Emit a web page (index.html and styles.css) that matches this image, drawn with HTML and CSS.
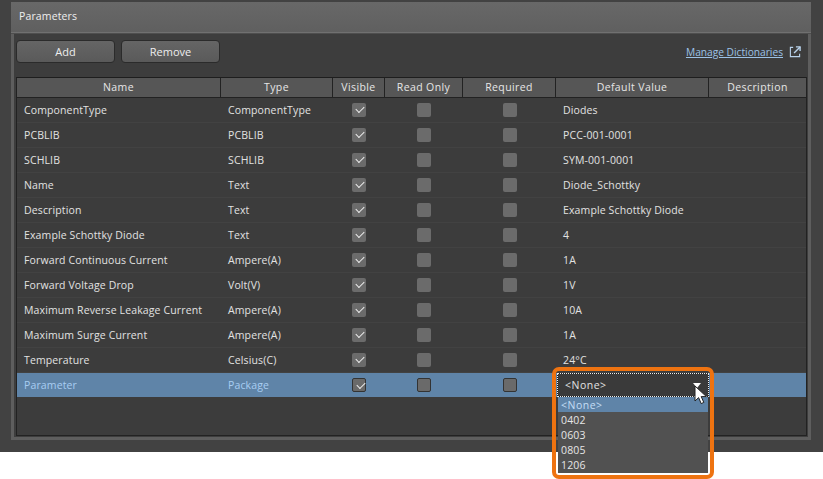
FILE: index.html
```html
<!DOCTYPE html>
<html lang="en">
<head>
<meta charset="utf-8">
<title>Parameters</title>
<link rel="stylesheet" href="styles.css">
</head>
<body>
<div class="window">
  <section class="panel">
    <header class="panel-head"><h1>Parameters</h1></header>
    <div class="panel-body">
      <div class="toolbar">
        <button class="btn">Add</button>
        <button class="btn">Remove</button>
        <a class="link" href="#">Manage Dictionaries</a>
        <svg class="ext" width="12" height="12" viewBox="0 0 13 13" fill="none" stroke="#b9d3ec" stroke-width="1.2"><path d="M4.5 1.5H1.5V11.5H11.5V8.5"/><path d="M7.5 1H12V5.5" stroke-width="1.5"/><path d="M12 1L5.5 7.5" stroke-width="1.5"/></svg>
      </div>
      <div class="table">
        <div class="row head"><span>Name</span><span>Type</span><span>Visible</span><span>Read Only</span><span>Required</span><span>Default Value</span><span>Description</span></div>

        <div class="row"><span>ComponentType</span><span>ComponentType</span><i class="box on"></i><i class="box"></i><i class="box"></i><span>Diodes</span><span></span></div>
        <div class="row"><span>PCBLIB</span><span>PCBLIB</span><i class="box on"></i><i class="box"></i><i class="box"></i><span>PCC-001-0001</span><span></span></div>
        <div class="row"><span>SCHLIB</span><span>SCHLIB</span><i class="box on"></i><i class="box"></i><i class="box"></i><span>SYM-001-0001</span><span></span></div>
        <div class="row"><span>Name</span><span>Text</span><i class="box on"></i><i class="box"></i><i class="box"></i><span>Diode_Schottky</span><span></span></div>
        <div class="row"><span>Description</span><span>Text</span><i class="box on"></i><i class="box"></i><i class="box"></i><span>Example Schottky Diode</span><span></span></div>
        <div class="row"><span>Example Schottky Diode</span><span>Text</span><i class="box on"></i><i class="box"></i><i class="box"></i><span>4</span><span></span></div>
        <div class="row"><span>Forward Continuous Current</span><span>Ampere(A)</span><i class="box on"></i><i class="box"></i><i class="box"></i><span>1A</span><span></span></div>
        <div class="row"><span>Forward Voltage Drop</span><span>Volt(V)</span><i class="box on"></i><i class="box"></i><i class="box"></i><span>1V</span><span></span></div>
        <div class="row"><span>Maximum Reverse Leakage Current</span><span>Ampere(A)</span><i class="box on"></i><i class="box"></i><i class="box"></i><span>10A</span><span></span></div>
        <div class="row"><span>Maximum Surge Current</span><span>Ampere(A)</span><i class="box on"></i><i class="box"></i><i class="box"></i><span>1A</span><span></span></div>
        <div class="row"><span>Temperature</span><span>Celsius(C)</span><i class="box on"></i><i class="box"></i><i class="box"></i><span>24°C</span><span></span></div>
        <div class="row selected"><span>Parameter</span><span>Package</span><i class="box on"></i><i class="box"></i><i class="box"></i><span></span><span></span></div>
      </div>
    </div>
  </section>

  <div class="callout">
    <div class="combo"><span>&lt;None&gt;</span><b class="arrow"></b></div>
    <ul class="list">
      <li class="active">&lt;None&gt;</li>
      <li>0402</li>
      <li>0603</li>
      <li>0805</li>
      <li>1206</li>
    </ul>
  </div>
  <svg class="cursor" width="14" height="21" viewBox="0 0 14 21"><path d="M1 1V16L4.6 12.6L7.2 18.6L9.8 17.4L7.2 11.6H12.4Z" fill="#fff" stroke="#222" stroke-width="1"/></svg>
</div>
</body>
</html>
```
FILE: styles.css
```css
* { box-sizing: border-box; }
html, body { margin: 0; height: 100%; background: #fff; overflow: hidden; }
body { font-family: "Open Sans", "Noto Sans", sans-serif; font-size: 10.5px; letter-spacing: .13px; color: #e2e2e2; }

.window {
  position: relative;
  width: 823px;
  height: 452px;
  background: #424242;
  padding: 2px 12px 12px 11px;
}

.panel {
  height: 100%;
  display: flex;
  flex-direction: column;
  background: #3d3d3d;
  border: 1px solid #5e5e5e;
  border-width: 0 3px 3px 3px;
}

.panel-head {
  height: 32px;
  margin: 0 -3px;
  padding: 7px 8px 0;
  background: linear-gradient(#686868, #5f5f5f);
  border-bottom: 1px solid #4e4e4e;
  box-shadow: inset 0 -5px 0 -4px #707070;
}
.panel-head h1 { margin: 0; font-size: 10.5px; font-weight: 400; line-height: 14px; color: #efefef; }

.panel-body { flex: 1; display: flex; flex-direction: column; padding: 6px 0 0 2px; min-height: 0; }

.toolbar { display: flex; align-items: center; height: 23px; margin-bottom: 14px; padding-right: 7px; }
.btn {
  width: 99px;
  height: 23px;
  margin-right: 6px;
  padding: 0;
  font: inherit;
  font-size: 11px;
  color: #eee;
  background: linear-gradient(#656565, #5a5a5a);
  border: 1px solid #2b2b2b;
  border-radius: 4px;
}
.link { margin-left: auto; color: #9cc2e6; text-decoration: underline; font-size: 10.2px; letter-spacing: 0; }
.ext { margin-left: 6px; }

.table {
  flex: 1;
  border: 1px solid #222;
  border-top-color: #1e1e1e;
  background: #3c3c3c;
  min-height: 0;
  margin-right: 1px;
  margin-bottom: 1px;
}

.row {
  display: grid;
  grid-template-columns: 204px 112px 52px 78px 93px 153px 97px;
  align-items: center;
  height: 25px;
  border-bottom: 1px solid #424242;
}
.row > span { padding-left: 7px; white-space: nowrap; }

.row.head {
  height: 20px;
  align-items: stretch;
  background: #565656;
  border-bottom: 1px solid #222;
  color: #e6e6e6;
  letter-spacing: .4px;
}
.row.head > span {
  padding: 0;
  text-align: center;
  line-height: 18px;
  border-right: 1px solid #222;
}
.row.head > span:last-child { border-right: 0; }

.box {
  justify-self: center;
  display: block;
  width: 14px;
  height: 14px;
  background: #6b6b6b;
  border-radius: 2px;
  position: relative;
}
.box.on::after {
  content: "";
  position: absolute;
  left: 3.5px;
  top: 2.5px;
  width: 7px;
  height: 4px;
  border-left: 1.3px solid #f0f0f0;
  border-bottom: 1.3px solid #f0f0f0;
  transform: rotate(-45deg);
}

.row.selected { background: #5f84a8; border-bottom: 0; height: 24px; color: #a8cdf2; }
.row.selected .box { background: #6a6a6a; border: 1px solid #333; }

.callout {
  position: absolute;
  left: 552px;
  top: 367px;
  width: 162px;
  height: 112px;
  border: 4px solid #ee7311;
  border-radius: 7px;
  padding: 2px 1px 1px;
}
.combo {
  display: flex;
  align-items: center;
  justify-content: space-between;
  height: 24px;
  width: 152px;
  padding: 0 7px 0 7px;
  background: #3a3a3a;
  outline: 1px dotted #eee;
  outline-offset: -1px;
  border: 1px solid #222;
  letter-spacing: .5px;
}
.arrow { width: 0; height: 0; border: 4px solid transparent; border-top: 5px solid #fff; border-bottom: 0; }

.list {
  margin: 0;
  padding: 0;
  width: 150px;
  height: 76px;
  list-style: none;
  margin-left: 1px;
  background: #515151;
  font-size: 10.5px;
}
.list li { height: 15px; line-height: 17px; padding-left: 3px; color: #e6e6e6; }
.list li.active { background: #5f84a8; color: #c4def5; letter-spacing: .5px; }

.cursor { position: absolute; left: 694px; top: 385px; }
```
